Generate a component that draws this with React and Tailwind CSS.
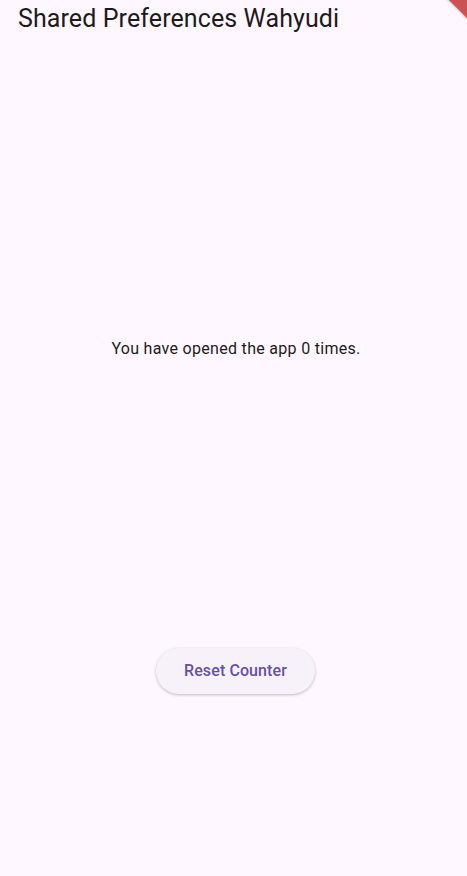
export default function App() {
  return (
    <div className="relative flex min-h-[876px] w-full flex-col overflow-hidden bg-[#fef7ff] font-['Roboto',sans-serif] text-[#1d1b20]">
      <header className="flex h-[36px] items-center px-[18px]">
        <h1 className="text-[25px] leading-none tracking-[0.1px]">
          Shared Preferences Wahyudi
        </h1>
      </header>

      <main className="flex flex-1 flex-col items-center">
        <p className="ml-[5px] mt-[303px] text-[16px] leading-[20px] tracking-[0.3px] text-[#1d1b20]">
          You have opened the app 0 times.
        </p>
        <button className="ml-[4px] mt-[289px] h-[46px] w-[159px] rounded-full bg-[#f7f2fa] text-[16px] font-medium tracking-[0.1px] text-[#6750a4] shadow-[0_1px_3px_rgba(0,0,0,0.25)]">
          Reset Counter
        </button>
      </main>

      {/* debug banner, only its corner shows */}
      <div className="pointer-events-none absolute right-[-65px] top-[-40px] h-[40px] w-[150px] rotate-45 bg-[#b71c1c]/75 shadow-[0_0_3px_rgba(0,0,0,0.3)]" />
    </div>
  );
}
